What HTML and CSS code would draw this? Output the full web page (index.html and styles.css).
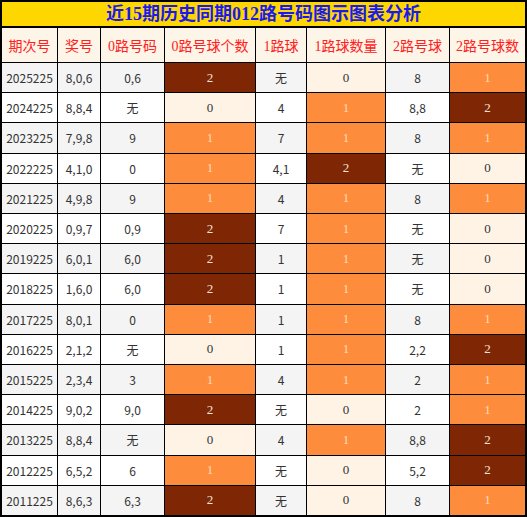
FILE: index.html
```html
<!DOCTYPE html>
<html lang="zh">
<head>
<meta charset="utf-8">
<title>近15期历史同期012路号码图示图表分析</title>
<link rel="stylesheet" href="styles.css">
</head>
<body>
<div class="board">
  <div class="title">近15期历史同期012路号码图示图表分析</div>
  <div class="grid">
    <div class="h">期次号</div><div class="h">奖号</div><div class="h">0路号码</div><div class="h">0路号球个数</div><div class="h">1路球</div><div class="h">1路球数量</div><div class="h">2路号球</div><div class="h">2路号球数</div>

    <div class="c g">2025225</div><div class="c g">8,0,6</div><div class="c g">0,6</div><div class="n n2">2</div><div class="c g">无</div><div class="n n0">0</div><div class="c g">8</div><div class="n n1">1</div>
    <div class="c">2024225</div><div class="c">8,8,4</div><div class="c">无</div><div class="n n0">0</div><div class="c">4</div><div class="n n1">1</div><div class="c">8,8</div><div class="n n2">2</div>
    <div class="c g">2023225</div><div class="c g">7,9,8</div><div class="c g">9</div><div class="n n1">1</div><div class="c g">7</div><div class="n n1">1</div><div class="c g">8</div><div class="n n1">1</div>
    <div class="c">2022225</div><div class="c">4,1,0</div><div class="c">0</div><div class="n n1">1</div><div class="c">4,1</div><div class="n n2">2</div><div class="c">无</div><div class="n n0">0</div>
    <div class="c g">2021225</div><div class="c g">4,9,8</div><div class="c g">9</div><div class="n n1">1</div><div class="c g">4</div><div class="n n1">1</div><div class="c g">8</div><div class="n n1">1</div>
    <div class="c">2020225</div><div class="c">0,9,7</div><div class="c">0,9</div><div class="n n2">2</div><div class="c">7</div><div class="n n1">1</div><div class="c">无</div><div class="n n0">0</div>
    <div class="c g">2019225</div><div class="c g">6,0,1</div><div class="c g">6,0</div><div class="n n2">2</div><div class="c g">1</div><div class="n n1">1</div><div class="c g">无</div><div class="n n0">0</div>
    <div class="c">2018225</div><div class="c">1,6,0</div><div class="c">6,0</div><div class="n n2">2</div><div class="c">1</div><div class="n n1">1</div><div class="c">无</div><div class="n n0">0</div>
    <div class="c g">2017225</div><div class="c g">8,0,1</div><div class="c g">0</div><div class="n n1">1</div><div class="c g">1</div><div class="n n1">1</div><div class="c g">8</div><div class="n n1">1</div>
    <div class="c">2016225</div><div class="c">2,1,2</div><div class="c">无</div><div class="n n0">0</div><div class="c">1</div><div class="n n1">1</div><div class="c">2,2</div><div class="n n2">2</div>
    <div class="c g">2015225</div><div class="c g">2,3,4</div><div class="c g">3</div><div class="n n1">1</div><div class="c g">4</div><div class="n n1">1</div><div class="c g">2</div><div class="n n1">1</div>
    <div class="c">2014225</div><div class="c">9,0,2</div><div class="c">9,0</div><div class="n n2">2</div><div class="c">无</div><div class="n n0">0</div><div class="c">2</div><div class="n n1">1</div>
    <div class="c g">2013225</div><div class="c g">8,8,4</div><div class="c g">无</div><div class="n n0">0</div><div class="c g">4</div><div class="n n1">1</div><div class="c g">8,8</div><div class="n n2">2</div>
    <div class="c">2012225</div><div class="c">6,5,2</div><div class="c">6</div><div class="n n1">1</div><div class="c">无</div><div class="n n0">0</div><div class="c">5,2</div><div class="n n2">2</div>
    <div class="c g">2011225</div><div class="c g">8,6,3</div><div class="c g">6,3</div><div class="n n2">2</div><div class="c g">无</div><div class="n n0">0</div><div class="c g">8</div><div class="n n1">1</div>
  </div>
</div>
</body>
</html>
```

FILE: styles.css
```css
html, body {
  margin: 0;
  padding: 0;
  background: #ffffff;
}

.board {
  width: 527px;
  height: 517px;
  box-sizing: border-box;
  border: 2px solid #000;
  background: #000;
  display: flex;
  flex-direction: column;
}

.title {
  height: 24px;
  flex: 0 0 24px;
  border-bottom: 2px solid #000;
  background: #ffd700;
  color: #1a1aee;
  font-family: "Liberation Serif", "Noto Sans CJK SC", serif;
  font-weight: bold;
  font-size: 18px;
  line-height: 24px;
  text-align: center;
}

.grid {
  flex: 1 1 auto;
  display: grid;
  grid-template-columns: 55px 42px 63px 90px 50px 78px 63px 75px;
  grid-template-rows: 34px repeat(15, 1fr);
  gap: 1px;
  background: #000;
}

.grid > div {
  display: flex;
  align-items: center;
  justify-content: center;
  white-space: nowrap;
  overflow: hidden;
}

.h {
  background: #fdf5e8;
  color: #ff2020;
  font-family: "Liberation Serif", "Noto Sans CJK SC", serif;
  font-size: 14px;
}

.c {
  background: #ffffff;
  color: #333333;
  font-family: "Noto Sans CJK SC", sans-serif;
  font-size: 12px;
}

.c.g {
  background: #f4f4f4;
}

.n {
  font-family: "Liberation Serif", serif;
  font-size: 13px;
}

.n0 {
  background: #fff3e6;
  color: #333333;
}

.n1 {
  background: #fd8d3c;
  color: #fdd9b8;
}

.n2 {
  background: #7f2704;
  color: #f2e2da;
}
```
